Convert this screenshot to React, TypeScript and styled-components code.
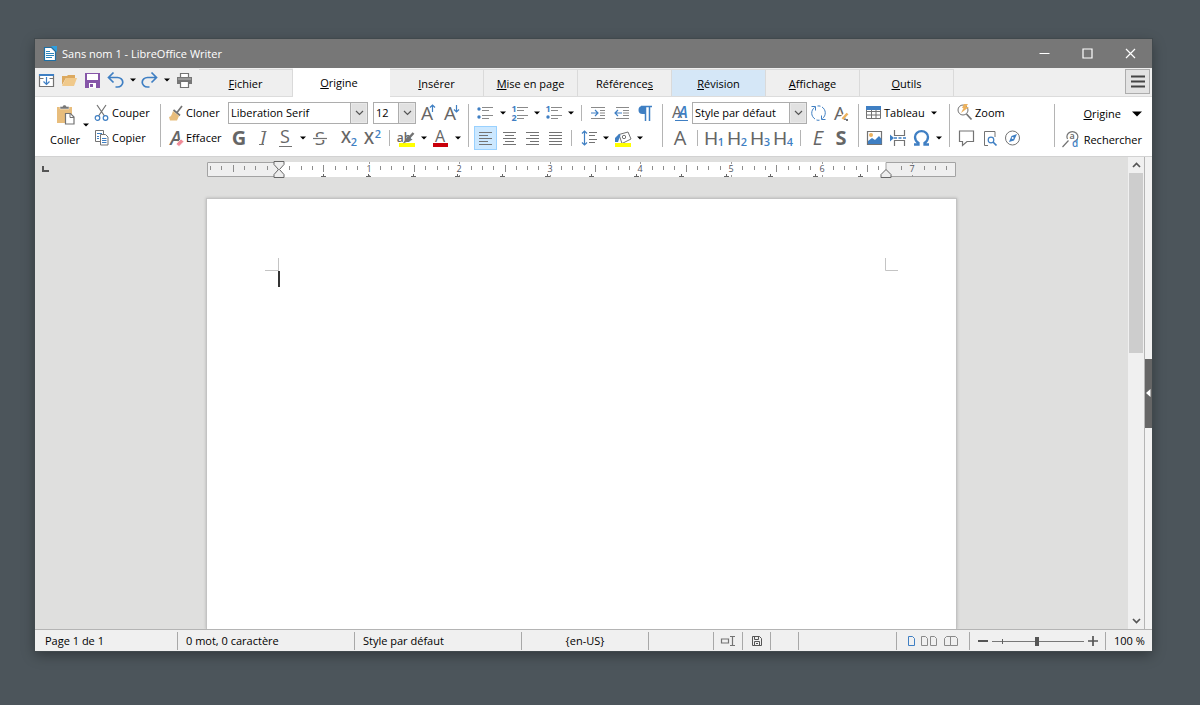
import React from "react";
import styled, { createGlobalStyle, css } from "styled-components";

const grey = "#737373";
const blue = "#3f7fc3";
const tan = "#e8bd7c";

const GlobalStyle = createGlobalStyle`
  * { box-sizing: border-box; }
  body {
    margin: 0;
    background: #4c555b;
    color: #000;
    font-family: "Open Sans", "Noto Sans", sans-serif;
    font-size: 11px;
    line-height: 16px;
  }
  button, select { font: inherit; color: inherit; }
  svg { display: block; flex: none; overflow: visible; }
`;

const Desktop = styled.div`
  display: flex;
  min-height: 100vh;
  padding: 39px 48px 54px 35px;
`;

const AppWindow = styled.main`
  display: flex;
  flex: 1;
  flex-direction: column;
  min-width: 0;
  background: #efefef;
  box-shadow: 0 0 0 1px #41494d, 0 4px 12px rgba(0, 0, 0, 0.35);
`;

/* Title bar */

const TitleBar = styled.header`
  display: flex;
  align-items: center;
  height: 29px;
  padding-left: 8px;
  background: #777;
  color: #fff;
`;

const Title = styled.h1`
  flex: 1;
  margin: 0 0 0 5px;
  font-size: 11px;
  font-weight: 400;
`;

const CaptionButton = styled.button`
  display: flex;
  align-items: center;
  justify-content: center;
  width: 43px;
  height: 29px;
  padding: 0;
  border: 0;
  background: none;
`;

/* Tab bar */

const TabBar = styled.nav`
  display: flex;
  height: 29px;
  background: #efefef;
  border-bottom: 1px solid #dcdcdc;
`;

const QuickAccess = styled.div`
  display: flex;
  width: 164px;
`;

const Tabs = styled.div`
  display: flex;
  flex: 1;
  align-items: flex-end;
`;

const Tab = styled.button<{ $active?: boolean; $tinted?: boolean }>`
  width: 94px;
  height: 27px;
  padding: 1px 0 0;
  border: 1px solid #dadada;
  border-width: 1px 1px 0 0;
  background: ${(p) => (p.$tinted ? "#d5e7f7" : "#efefef")};
  ${(p) =>
    p.$active &&
    css`
      width: 97px;
      height: 29px;
      margin-bottom: -1px;
      padding: 0 4px 0 0;
      border-color: #fff;
      background: #fff;
    `}
`;

const MenuButton = styled.button`
  display: flex;
  align-items: center;
  justify-content: center;
  width: 25px;
  height: 25px;
  margin: 1px 2px 0 0;
  padding: 0;
  border: 1px solid #adadad;
  background: #e3e3e3;
`;

/* Toolbar */

const Toolbar = styled.section`
  display: flex;
  height: 60px;
  padding: 4px 10px 0 12px;
  background: #fff;
  border-bottom: 1px solid #d2d2d2;
`;

const Group = styled.div<{ $end?: boolean }>`
  display: flex;
  flex-direction: column;
  gap: ${(p) => (p.$end ? 2 : 1)}px;
  padding-top: ${(p) => (p.$end ? 1 : 0)}px;
`;

const Row = styled.div<{ $end?: boolean }>`
  display: flex;
  align-items: center;
  justify-content: ${(p) => (p.$end ? "flex-end" : "flex-start")};
  height: 24px;
`;

const Tool = styled.button<{ $pressed?: boolean }>`
  display: flex;
  width: 23px;
  height: 24px;
  padding: 0;
  border: 0;
  background: none;
  ${(p) =>
    p.$pressed &&
    css`
      background: #cce8ff;
      box-shadow: inset 0 0 0 1px #99d1ff;
    `}
`;

const CaretButton = styled.button<{ $width?: number }>`
  display: flex;
  align-items: center;
  justify-content: center;
  width: ${(p) => p.$width ?? 11}px;
  height: 24px;
  padding: 0;
  border: 0;
  background: none;
`;

const LabelTool = styled.button<{ $width?: number }>`
  display: flex;
  align-items: center;
  width: ${(p) => (p.$width ? p.$width + "px" : "auto")};
  height: 24px;
  padding: 0;
  border: 0;
  background: none;
  white-space: nowrap;
`;

const PasteButton = styled.button`
  display: flex;
  flex-direction: column;
  align-items: center;
  gap: 6px;
  width: 36px;
  height: 48px;
  padding: 3px 0 0;
  border: 0;
  background: none;
`;

const PasteGroup = styled.div`
  display: flex;
  align-items: center;
  height: 48px;
  margin-right: 5px;
`;

const Divider = styled.div<{ $wide?: boolean; $push?: boolean }>`
  width: ${(p) => (p.$wide ? 13 : 11)}px;
  height: 43px;
  margin-top: 3px;
  margin-left: ${(p) => (p.$push ? "auto" : "0")};
  background: linear-gradient(#b4b4b4, #b4b4b4) center / 1px 100% no-repeat;
`;

const SmallDivider = styled.div`
  width: 11px;
  height: 16px;
  background: linear-gradient(#b4b4b4, #b4b4b4) center / 1px 100% no-repeat;
`;

const Spacer = styled.div`
  width: 7px;
`;

const ComboBox = styled.div<{ $width: number; $gap?: boolean }>`
  display: grid;
  grid-template-columns: 1fr 17px;
  width: ${(p) => p.$width}px;
  height: 22px;
  margin-right: ${(p) => (p.$gap ? 5 : 0)}px;
  border: 1px solid #adadad;
  background: #fff;
`;

const Select = styled.select`
  grid-column: 1 / 3;
  grid-row: 1;
  min-width: 0;
  padding: 0 0 0 2px;
  border: 0;
  outline: 0;
  background: none;
  appearance: none;
`;

const ComboArrow = styled.span`
  display: flex;
  grid-column: 2;
  grid-row: 1;
  align-items: center;
  justify-content: center;
  border-left: 1px solid #adadad;
  box-shadow: inset 0 0 0 1px #e9e9e9;
  background: #e1e1e1;
  pointer-events: none;
`;

const ContextMenu = styled(LabelTool)`
  gap: 11px;
`;

/* Document area */

const Workspace = styled.section`
  display: flex;
  flex: 1;
  min-height: 0;
`;

const Editor = styled.div`
  display: flex;
  flex: 1;
  flex-direction: column;
  min-width: 0;
  padding-top: 4px;
  background: #dfdfde;
`;

const RulerBar = styled.div`
  display: grid;
  grid-template-columns: 1fr 749px 1fr;
  height: 18px;
`;

const TabKind = styled.div`
  padding: 5px 0 0 7px;
`;

const Sheet = styled.article`
  display: flex;
  flex: 1;
  justify-content: space-between;
  align-self: center;
  align-items: flex-start;
  width: 751px;
  margin-top: 19px;
  padding: 59px 58px 0;
  background: #fff;
  border: 1px solid #c3c3c3;
  border-bottom: 0;
  box-shadow: 0 0 3px rgba(0, 0, 0, 0.2);
`;

const ScrollBar = styled.div`
  display: flex;
  flex-direction: column;
  width: 16px;
  padding: 0 1px;
  background: #f0f0f0;
`;

const ScrollButton = styled.button`
  display: flex;
  align-items: center;
  justify-content: center;
  height: 16px;
  padding: 0;
  border: 0;
  background: none;
`;

const ScrollTrack = styled.div`
  flex: 1;
`;

const ScrollThumb = styled.div`
  height: 41%;
  background: #cdcdcd;
`;

const SideDeck = styled.aside`
  display: flex;
  flex-direction: column;
  justify-content: center;
  width: 8px;
  border-left: 1px solid #b5b5b5;
  background: #f2f2f2;
`;

const DeckHandle = styled.button`
  display: flex;
  align-items: center;
  height: 69px;
  padding: 0;
  border: 0;
  background: #666;
`;

/* Status bar */

const StatusBar = styled.footer`
  display: flex;
  height: 22px;
  padding-top: 2px;
  border-top: 1px solid #b4b4b4;
  background: #f0f0f0;
`;

const StatusCell = styled.div<{ $width?: number; $center?: boolean; $first?: boolean }>`
  display: flex;
  flex: ${(p) => (p.$width ? "none" : "1")};
  align-items: center;
  justify-content: ${(p) => (p.$center ? "center" : "flex-start")};
  width: ${(p) => (p.$width ? p.$width + "px" : "auto")};
  height: 18px;
  padding-left: ${(p) => (p.$center ? 0 : p.$first ? 10 : 8)}px;
  border-left: ${(p) => (p.$first ? "0" : "1px solid #a8a8a8")};
  white-space: nowrap;
`;

const StatusTool = styled.button`
  display: flex;
  padding: 0;
  border: 0;
  background: none;
`;

const ZoomSlider = styled.input`
  width: 92px;
  height: 14px;
  margin: 0 4px;
  appearance: none;
  background:
    linear-gradient(#5f5f5f, #5f5f5f) 10px center / 1px 5px no-repeat,
    linear-gradient(#777, #777) center / 100% 1px no-repeat;
  &::-webkit-slider-thumb {
    appearance: none;
    width: 4px;
    height: 9px;
    background: #555;
  }
`;

/* Icons */

const Icon = ({ children, w = 23, h = 24 }: { children: React.ReactNode; w?: number; h?: number }) => (
  <svg width={w} height={h} viewBox={`0 0 ${w} ${h}`} fill="none" stroke={grey} strokeWidth="1.2" aria-hidden="true">
    {children}
  </svg>
);

type LetterProps = {
  children: string;
  x?: number;
  y?: number;
  size?: number;
  weight?: number;
  italic?: boolean;
  color?: string;
  family?: string;
};

const Letter = ({ children, x = 11, y = 19, size = 19, weight = 400, italic, color = "#666", family }: LetterProps) => (
  <text
    x={x}
    y={y}
    textAnchor="middle"
    fontSize={size}
    fontWeight={weight}
    fontStyle={italic ? "italic" : "normal"}
    fontFamily={family ?? "Open Sans, sans-serif"}
    fill={color}
    stroke="none"
  >
    {children}
  </text>
);

const Down = ({ size = 6 }: { size?: number }) => (
  <Icon w={size} h={size === 6 ? 4 : 6}>
    <path d={size === 6 ? "M0 0.5h6l-3 3z" : "M0 0.5h10l-5 5z"} fill="#000" stroke="none" />
  </Icon>
);

const Caret = ({ label, width }: { label: string; width?: number }) => (
  <CaretButton aria-label={label} $width={width}>
    <Down />
  </CaretButton>
);

const Combo = ({ label, value, width, gap }: { label: string; value: string; width: number; gap?: boolean }) => (
  <ComboBox $width={width} $gap={gap}>
    <Select aria-label={label} defaultValue={value}>
      <option>{value}</option>
    </Select>
    <ComboArrow>
      <Icon w={9} h={6}>
        <path d="M1 1l3.5 3.5L8 1" stroke="#555" />
      </Icon>
    </ComboArrow>
  </ComboBox>
);

const ListLines = ({ x = 10 }: { x?: number }) => (
  <path
    d={`M${x} 6.5h11M${x} 9.5h7M${x} 14.5h11M${x} 17.5h7`}
    stroke="#8a8a8a"
    strokeWidth="1"
  />
);

const Heading = ({ level }: { level: string }) => (
  <Tool aria-label={`Titre ${level}`}>
    <Icon>
      <Letter x={8} y={19} size={19} family="Liberation Sans, sans-serif">H</Letter>
      <Letter x={18} y={20} size={11} weight={600} color={blue}>{level}</Letter>
    </Icon>
  </Tool>
);

const alignPaths = [
  { label: "Aligner à gauche", d: "M5 6.5h13M5 9.5h9M5 12.5h13M5 15.5h9M5 18.5h13" },
  { label: "Centrer", d: "M6 6.5h13M8 9.5h9M6 12.5h13M8 15.5h9M6 18.5h13" },
  { label: "Aligner à droite", d: "M6 6.5h13M10 9.5h9M6 12.5h13M10 15.5h9M6 18.5h13" },
  { label: "Justifier", d: "M6 6.5h13M6 9.5h13M6 12.5h13M6 15.5h13M6 18.5h13" },
];

const rulerTicks = Array.from({ length: 66 }, (_, i) => i - 6);
const inch = 90.6;
const zero = 71.5;

const Ruler = () => (
  <svg width="749" height="18" viewBox="0 0 749 18" fill="none" role="img" aria-label="Règle">
    <rect x="0" y="1" width="749" height="15" fill="#fff" />
    <path d="M0.5 1.5H71V15.5H0.5zM679 1.5H748.5V15.5H679z" fill="#efefef" stroke="#a3a3a3" />
    {rulerTicks.map((n) => {
      const x = Math.floor(zero + (n * inch) / 8);
      if (n === 0 || n % 8 === 0 || Math.abs(x - 679) < 6 || x > 744) return null;
      const half = n % 4 === 0;
      return <path key={n} d={half ? `M${x + 0.5} 4v7` : `M${x + 0.5} 5v4`} stroke="#8d8d8d" />;
    })}
    {[1, 2, 3, 4, 5, 6, 7].map((n) => {
      const x = Math.floor(zero + n * inch);
      return (
        <React.Fragment key={n}>
          <path d={`M${x + 0.5} 1v2M${x + 0.5} 14v2`} stroke="#9a9a9a" />
          <text x={x} y="11" fontSize="9" textAnchor="middle" fill="#55565f" fontFamily="Open Sans, sans-serif">
            {n}
          </text>
        </React.Fragment>
      );
    })}
    {Array.from({ length: 13 }, (_, i) => Math.round(zero + (i + 1) * 44.7)).map((x) => (
      <path key={x} d={`M${x - 2} 15.5h5M${x + 0.5} 13v3`} stroke="#666" />
    ))}
    <path d="M67 0.5h10v3l-4.500 5 4.500 5v3h-10v-3l4.500-5-4.500-5z" fill="#eee" stroke="#666" />
    <path d="M674 16.500v-3l5-5 5 5v3z" fill="#eee" stroke="#666" />
  </svg>
);

const tabs = [
  { key: "F", before: "", after: "ichier" },
  { key: "O", before: "", after: "rigine", active: true },
  { key: "I", before: "", after: "nsérer" },
  { key: "M", before: "", after: "ise en page" },
  { key: "s", before: "Référence", after: "" },
  { key: "R", before: "", after: "évision", tinted: true },
  { key: "A", before: "", after: "ffichage" },
  { key: "O", before: "", after: "utils" },
];

export default function App() {
  return (
    <>
      <GlobalStyle />
      <Desktop>
        <AppWindow>
          <TitleBar>
            <Icon w={14} h={16}>
              <path d="M1.500 1.500h7l4 4v9h-11z" fill="#fff" stroke="#1d6fa5" />
              <path d="M8 0h6v6z" fill="#2e9fe0" stroke="none" />
              <path d="M3 5.500h4M3 7.500h8M3 9.500h8M3 11.500h6" stroke="#2a83ba" strokeWidth="1" />
            </Icon>
            <Title>Sans nom 1 - LibreOffice Writer</Title>
            <CaptionButton aria-label="Réduire">
              <Icon w={11} h={11}><path d="M0.500 5.500h10" stroke="#fff" strokeWidth="1" /></Icon>
            </CaptionButton>
            <CaptionButton aria-label="Agrandir">
              <Icon w={11} h={11}><path d="M1 1h9v9H1z" stroke="#fff" /></Icon>
            </CaptionButton>
            <CaptionButton aria-label="Fermer">
              <Icon w={11} h={11}><path d="M1 1l9 9M10 1l-9 9" stroke="#fff" /></Icon>
            </CaptionButton>
          </TitleBar>

          <TabBar>
            <QuickAccess>
              <Tool aria-label="Barre de menus">
                <Icon>
                  <path d="M4.500 6.500h14v12h-14z" fill="#fff" />
                  <path d="M4 7h15" stroke={blue} strokeWidth="2" />
                  <path d="M4.500 10.500h4M14.500 10.500h4" strokeWidth="1" />
                  <path d="M11.500 9v7M8.500 13.500l3 3 3-3" stroke={blue} />
                </Icon>
              </Tool>
              <Tool aria-label="Ouvrir">
                <Icon>
                  <path d="M4 17V8h5l1-1h7v3H8z" fill="#dca95f" stroke="none" />
                  <path d="M4 18l4-8h11l-3 8z" fill="#f0c98b" stroke="none" />
                </Icon>
              </Tool>
              <Tool aria-label="Enregistrer">
                <Icon>
                  <path d="M4 5h15v15H4z" fill="#8656a8" stroke="none" />
                  <path d="M6 6h11v6H6zM8 15h7v5H8z" fill="#fff" stroke="none" />
                  <path d="M9 16h3v3H9z" fill="#8656a8" stroke="none" />
                </Icon>
              </Tool>
              <Tool aria-label="Annuler">
                <Icon>
                  <path d="M9.500 4.500l-5 5 5 5M5 9.500h8.500a5 4.500 0 0 1 0 9.500h-2" stroke={blue} strokeWidth="1.700" />
                </Icon>
              </Tool>
              <Caret label="Historique d'annulation" />
              <Tool aria-label="Rétablir">
                <Icon>
                  <path d="M13.500 4.500l5 5-5 5M18 9.500H9.500a5 4.500 0 0 0 0 9.500h2" stroke={blue} strokeWidth="1.700" />
                </Icon>
              </Tool>
              <Caret label="Historique de rétablissement" />
              <Tool aria-label="Imprimer">
                <Icon>
                  <path d="M8.500 9V5.500h8V9" fill="#fff" />
                  <path d="M5 9h15v7H5z" fill="#777" stroke="none" />
                  <path d="M6 11h13" stroke="#bbb" strokeWidth="1" />
                  <path d="M8.500 13.500h8v6h-8z" fill="#fff" />
                </Icon>
              </Tool>
            </QuickAccess>
            <Tabs role="tablist">
              {tabs.map((t) => (
                <Tab key={t.key + t.after} role="tab" aria-selected={!!t.active} $active={t.active} $tinted={t.tinted}>
                  {t.before}
                  <u>{t.key}</u>
                  {t.after}
                </Tab>
              ))}
            </Tabs>
            <MenuButton aria-label="Menu">
              <Icon w={14} h={13}>
                <path d="M0 1.500h14M0 6.500h14M0 11.500h14" stroke="#444" strokeWidth="2" />
              </Icon>
            </MenuButton>
          </TabBar>

          <Toolbar aria-label="Origine">
            <PasteGroup>
              <PasteButton>
                <Icon w={20} h={22}>
                  <path d="M2 3h15v16H2z" fill={tan} stroke="none" />
                  <path d="M5 5V2.500h2.500l1-1.500h2l1 1.500H14V5z" fill="#777" stroke="#fff" strokeWidth="0.500" />
                  <path d="M10.500 9.500h5l3.500 3.500v7h-8.500z" fill="#fff" />
                  <path d="M15 9.500v4h4" strokeWidth="1" />
                </Icon>
                Coller
              </PasteButton>
              <Caret label="Collage spécial" width={6} />
            </PasteGroup>
            <Group>
              <LabelTool $width={60}>
                <Icon w={18}>
                  <path d="M3 4l7.500 11M12 4L4.500 15" />
                  <circle cx="3.500" cy="17" r="2.300" stroke={blue} />
                  <circle cx="11.500" cy="17" r="2.300" stroke={blue} />
                </Icon>
                Couper
              </LabelTool>
              <LabelTool $width={60}>
                <Icon w={18}>
                  <path d="M6 15.500H1.500v-11h8V8" strokeWidth="1" />
                  <path d="M6.500 8.500h5l2.500 2.500v8H6.500z" fill="#fff" strokeWidth="1" />
                  <path d="M3 7.500h5M3 10.500h2M3 12.500h2M8 12.500h4.500M8 14.500h4.500M8 16.500h4.500" stroke={blue} strokeWidth="1" />
                </Icon>
                Copier
              </LabelTool>
            </Group>
            <Divider $wide />
            <Group>
              <Row>
                <LabelTool $width={61}>
                  <Icon w={19}>
                    <path d="M15 5l-5 6.500M6.500 9l6.500 5.500" strokeWidth="1.700" />
                    <path d="M6 10l6 5-2 4.500H3l-1-3.500c2 0 3-3 4-6z" fill={tan} stroke="none" />
                  </Icon>
                  Cloner
                </LabelTool>
                <Combo label="Nom de police" value="Liberation Serif" width={140} gap />
                <Combo label="Taille de police" value="12" width={43} />
                <Tool aria-label="Augmenter la taille">
                  <Icon>
                    <Letter x={11} y={19} size={19}>A</Letter>
                    <path d="M16.500 11V4M14 6.500L16.500 4 19 6.500" stroke={blue} />
                  </Icon>
                </Tool>
                <Tool aria-label="Diminuer la taille">
                  <Icon>
                    <Letter x={11} y={19} size={19}>A</Letter>
                    <path d="M17.500 4v7M15 8.500l2.500 2.500L20 8.500" stroke={blue} />
                  </Icon>
                </Tool>
              </Row>
              <Row>
                <LabelTool $width={61}>
                  <Icon w={19}>
                    <Letter x={9} y={19} size={19} italic weight={600}>A</Letter>
                    <path d="M9 18l5-5 3 2.500-5 5z" fill="#f08c98" stroke="#fff" strokeWidth="0.700" />
                  </Icon>
                  Effacer
                </LabelTool>
                <Tool aria-label="Gras"><Icon><Letter weight={700} x={11} size={20}>G</Letter></Icon></Tool>
                <Tool aria-label="Italique">
                  <Icon>
                    <Letter italic x={12}>I</Letter>
                    <path d="M10.500 5.500h5M8 18.500h5" />
                  </Icon>
                </Tool>
                <Tool aria-label="Souligné">
                  <Icon>
                    <Letter size={18} y={17} x={11}>S</Letter>
                    <path d="M5 20.500h13" strokeWidth="1" />
                  </Icon>
                </Tool>
                <Caret label="Types de soulignement" />
                <Tool aria-label="Barré">
                  <Icon>
                    <Letter size={19} x={12}>S</Letter>
                    <path d="M5 12.500h14" stroke="#fff" strokeWidth="3" />
                    <path d="M5 12.500h14" />
                  </Icon>
                </Tool>
                <Spacer />
                <Tool aria-label="Indice">
                  <Icon>
                    <Letter size={16} x={8} y={17} weight={600}>X</Letter>
                    <Letter size={11} x={16} y={20} weight={600} color={blue}>2</Letter>
                  </Icon>
                </Tool>
                <Tool aria-label="Exposant">
                  <Icon>
                    <Letter size={16} x={8} y={18} weight={600}>X</Letter>
                    <Letter size={11} x={17} y={12} weight={600} color={blue}>2</Letter>
                  </Icon>
                </Tool>
                <SmallDivider />
                <Tool aria-label="Surlignage">
                  <Icon>
                    <path d="M4 17h16v4H4z" fill="#ff0" stroke="none" />
                    <Letter size={12} x={9} y={16} weight={600}>ab</Letter>
                    <path d="M18.500 7l-5.500 6M11 15l2-3 2 1.500z" strokeWidth="2.500" />
                  </Icon>
                </Tool>
                <Caret label="Couleur de surlignage" />
                <Tool aria-label="Couleur de police">
                  <Icon>
                    <Letter size={16} x={11} y={16}>A</Letter>
                    <path d="M4 17h15v4H4z" fill="#c9000b" stroke="none" />
                  </Icon>
                </Tool>
                <Caret label="Choisir la couleur" />
              </Row>
            </Group>
            <Divider />
            <Group>
              <Row>
                <Tool aria-label="Puces">
                  <Icon>
                    <ListLines x={8} />
                    <circle cx="5" cy="8" r="1.700" fill={blue} stroke="none" />
                    <circle cx="5" cy="16" r="1.700" fill={blue} stroke="none" />
                  </Icon>
                </Tool>
                <Caret label="Choix de puces" />
                <Tool aria-label="Numérotation">
                  <Icon>
                    <ListLines x={9} />
                    <Letter size={9} x={6} y={11} weight={700} color={blue}>1</Letter>
                    <Letter size={9} x={6} y={20} weight={700} color={blue}>2</Letter>
                  </Icon>
                </Tool>
                <Caret label="Choix de numérotation" />
                <Tool aria-label="Plan">
                  <Icon>
                    <ListLines x={9} />
                    <Letter size={9} x={6} y={11} weight={700} color={blue}>1</Letter>
                    <circle cx="6" cy="16" r="1.700" fill={blue} stroke="none" />
                  </Icon>
                </Tool>
                <Caret label="Choix de plan" />
                <SmallDivider />
                <Tool aria-label="Augmenter le retrait">
                  <Icon>
                    <path d="M4 6.500h14M13 9.500h5M13 14.500h5M4 17.500h14" stroke="#8a8a8a" strokeWidth="1" />
                    <path d="M4 12h7M8 9l3 3-3 3" stroke={blue} />
                    <path d="M13 12h5" stroke="#8a8a8a" strokeWidth="1" />
                  </Icon>
                </Tool>
                <Tool aria-label="Diminuer le retrait">
                  <Icon>
                    <path d="M6 6.500h13M13 9.500h6M13 14.500h6M6 17.500h13" stroke="#8a8a8a" strokeWidth="1" />
                    <path d="M5 12h7M8 9l-3 3 3 3" stroke={blue} />
                    <path d="M13 12h6" stroke="#8a8a8a" strokeWidth="1" />
                  </Icon>
                </Tool>
                <Tool aria-label="Marques de formatage">
                  <Icon>
                    <path d="M12 5H9.500a4 4 0 0 0 0 8H12z" fill={blue} stroke="none" />
                    <path d="M8 5.500h11M12.500 5v15M16.500 5v15" stroke={blue} strokeWidth="1.500" />
                  </Icon>
                </Tool>
              </Row>
              <Row>
                {alignPaths.map((a, i) => (
                  <Tool key={a.label} aria-label={a.label} $pressed={i === 0}>
                    <Icon><path d={a.d} strokeWidth="1" /></Icon>
                  </Tool>
                ))}
                <SmallDivider />
                <Tool aria-label="Interligne">
                  <Icon>
                    <path d="M7.500 5v14M5 7.500L7.500 5 10 7.500M5 16.500L7.500 19l2.500-2.500" stroke={blue} />
                    <path d="M12 6.500h8M12 9.500h6M12 13.500h8M12 16.500h6" strokeWidth="1" />
                  </Icon>
                </Tool>
                <Caret label="Choisir l'interligne" />
                <Tool aria-label="Couleur d'arrière-plan">
                  <Icon>
                    <path d="M8 8.500l9-2.500 3 7-9 4.500z" fill="#fff" strokeWidth="1" />
                    <circle cx="13" cy="11" r="1.700" strokeWidth="1" />
                    <path d="M4 16v-4l4-4 1.500 1-2.500 7z" fill={blue} stroke="none" />
                    <path d="M4 17h16v4H4z" fill="#ff0" stroke="none" />
                  </Icon>
                </Tool>
                <Caret label="Choisir l'arrière-plan" />
              </Row>
            </Group>
            <Divider $wide />
            <Group>
              <Row>
                <Tool aria-label="Styles">
                  <Icon>
                    <Letter size={16} x={8} y={17}>A</Letter>
                    <Letter size={16} x={14} y={17} italic weight={600} color={blue}>A</Letter>
                    <path d="M6 19.500h13" stroke={blue} strokeWidth="1" />
                  </Icon>
                </Tool>
                <Combo label="Style de paragraphe" value="Style par défaut" width={115} />
                <Tool aria-label="Actualiser le style">
                  <Icon>
                    <path d="M8 18A7 7 0 0 1 7.500 6.500M4.500 5.500h4v4M15 6a7 7 0 0 1 .5 11.500M18.500 18.500h-4v-4M10.500 5a7 7 0 0 1 3 .200M9.500 19a7 7 0 0 0 3 .200" stroke={blue} strokeWidth="1" />
                  </Icon>
                </Tool>
                <Tool aria-label="Nouveau style">
                  <Icon>
                    <Letter size={19} x={10} y={19}>A</Letter>
                    <path d="M18 11l-6.500 6.500" stroke="#fff" strokeWidth="4" />
                    <path d="M17.500 12.500L12.500 18" stroke="#edb25d" strokeWidth="2.500" />
                    <path d="M16 18h2v2h-2z" fill={grey} stroke="none" />
                  </Icon>
                </Tool>
              </Row>
              <Row>
                <Tool aria-label="Style par défaut"><Icon><Letter size={20}>A</Letter></Icon></Tool>
                <SmallDivider />
                {["1", "2", "3", "4"].map((n) => <Heading key={n} level={n} />)}
                <SmallDivider />
                <Tool aria-label="Accentuation"><Icon><Letter italic x={12} size={20}>E</Letter></Icon></Tool>
                <Tool aria-label="Accentuation forte"><Icon><Letter weight={700} x={12} size={20}>S</Letter></Icon></Tool>
              </Row>
            </Group>
            <Divider />
            <Group>
              <Row>
                <LabelTool $width={64}>
                  <Icon w={20}>
                    <path d="M2.500 6.500h14v11h-14zM7.500 8v9.500M12 8v9.500M2.500 10.500h14M2.500 14h14" strokeWidth="1" />
                    <path d="M2 5h15v4H2z" fill={blue} stroke="none" />
                  </Icon>
                  Tableau
                </LabelTool>
                <Caret label="Insérer un tableau" />
              </Row>
              <Row>
                <Tool aria-label="Image">
                  <Icon>
                    <path d="M3.500 5.500h14v13h-14z" fill="#fff" />
                    <path d="M4 18v-3l4-3 3 2 4-4 2.500 3v5z" fill={blue} stroke="none" />
                    <circle cx="7" cy="9" r="2" fill="#edb25d" stroke="none" />
                  </Icon>
                </Tool>
                <Tool aria-label="Saut de page">
                  <Icon>
                    <path d="M7.500 4v5.500h10V4M7.500 20v-5.500h10V20" />
                    <path d="M7 12h13" stroke={blue} strokeDasharray="3 1.500" strokeWidth="1.500" />
                    <path d="M3 8.500v7l4-3.500z" fill={blue} stroke="none" />
                  </Icon>
                </Tool>
                <Tool aria-label="Caractères spéciaux">
                  <Icon>
                    <path
                      d="M4 18.500h4.500V17C6 15.500 5 13 5 11a6.500 5.800 0 0 1 13 0c0 2-1 4.500-3.500 6v1.500H19"
                      stroke={blue}
                      strokeWidth="2.300"
                    />
                  </Icon>
                </Tool>
                <Caret label="Choisir un caractère" />
              </Row>
            </Group>
            <Divider />
            <Group>
              <Row>
                <LabelTool>
                  <Icon w={20}>
                    <circle cx="8" cy="9" r="5" strokeWidth="1" />
                    <path d="M11.500 13l5 5.500" strokeWidth="1.700" />
                    <path d="M9 3h4l-2 3h3l-8 6 2.500-5H7z" fill="#edb25d" stroke="none" />
                  </Icon>
                  Zoom
                </LabelTool>
              </Row>
              <Row>
                <Tool aria-label="Commentaire">
                  <Icon><path d="M4.500 5h14v10.500H12l-4.500 4v-4h-3z" /></Icon>
                </Tool>
                <Tool aria-label="Aperçu">
                  <Icon>
                    <path d="M10 19.500H6.500v-14H17V11" strokeWidth="1" />
                    <circle cx="13" cy="14" r="2.800" stroke={blue} />
                    <path d="M15 16l3.500 3.500" stroke={blue} strokeWidth="1.700" />
                  </Icon>
                </Tool>
                <Tool aria-label="Navigateur">
                  <Icon>
                    <circle cx="11.500" cy="12" r="7" strokeWidth="1" />
                    <path d="M16 8l-3 6.500-5 1.500 2.500-6z" fill={blue} stroke="none" />
                    <circle cx="11.700" cy="12" r="1" fill="#fff" stroke="none" />
                  </Icon>
                </Tool>
              </Row>
            </Group>
            <Divider $push />
            <Group $end>
              <Row $end>
                <ContextMenu>
                  <span><u>O</u>rigine</span>
                  <Down size={10} />
                </ContextMenu>
              </Row>
              <LabelTool>
                <Icon w={24}>
                  <path d="M7.500 11a5.500 5 0 1 1 6.500 2.500M8.500 12.500L2.500 19" />
                  <Letter size={9} x={12} y={11} weight={600}>a</Letter>
                  <Letter size={10} x={15} y={19} weight={600} color={blue}>d</Letter>
                </Icon>
                Rechercher
              </LabelTool>
            </Group>
          </Toolbar>

          <Workspace>
            <Editor>
              <RulerBar>
                <TabKind>
                  <Icon w={8} h={7}><path d="M1 0v5h6" stroke="#555" strokeWidth="2" /></Icon>
                </TabKind>
                <Ruler />
              </RulerBar>
              <Sheet>
                <Icon w={15} h={30}>
                  <path d="M13.500 0v13M0 12.500h13" stroke="#c4c4c4" strokeWidth="1" />
                  <path d="M14 13v16" stroke="#333" strokeWidth="2" />
                </Icon>
                <Icon w={13} h={14}>
                  <path d="M0.500 0v12.500H13" stroke="#c4c4c4" strokeWidth="1" />
                </Icon>
              </Sheet>
            </Editor>
            <ScrollBar>
              <ScrollButton aria-label="Défiler vers le haut">
                <Icon w={9} h={6}><path d="M1 5l3.500-3.500L8 5" stroke="#555" strokeWidth="1.700" /></Icon>
              </ScrollButton>
              <ScrollTrack><ScrollThumb /></ScrollTrack>
              <ScrollButton aria-label="Défiler vers le bas">
                <Icon w={9} h={6}><path d="M1 1l3.500 3.500L8 1" stroke="#555" strokeWidth="1.700" /></Icon>
              </ScrollButton>
            </ScrollBar>
            <SideDeck>
              <DeckHandle aria-label="Afficher le volet latéral">
                <Icon w={6} h={8}><path d="M5.500 0v8L1 4z" fill="#fff" stroke="none" /></Icon>
              </DeckHandle>
            </SideDeck>
          </Workspace>

          <StatusBar>
            <StatusCell $width={142} $first>Page 1 de 1</StatusCell>
            <StatusCell $width={177}>0 mot, 0 caractère</StatusCell>
            <StatusCell $width={167}>Style par défaut</StatusCell>
            <StatusCell $width={127} $center>{"{en-US}"}</StatusCell>
            <StatusCell $width={65} />
            <StatusCell $width={29} $center>
              <StatusTool aria-label="Mode d'insertion">
                <Icon w={16} h={12}>
                  <path d="M1.500 4h7v4h-7zM10 1.500h5M10 10.500h5M12.500 1.500v9" />
                </Icon>
              </StatusTool>
            </StatusCell>
            <StatusCell $width={28} $center>
              <StatusTool aria-label="État du document">
                <Icon w={10} h={10}>
                  <path d="M0.500 0.500h7l2 2v7h-9zM2.500 0.500v3h4v-3M2.500 9.500v-4h5v4M4 7.500h2" strokeWidth="1" stroke="#555" />
                </Icon>
              </StatusTool>
            </StatusCell>
            <StatusCell $width={28} />
            <StatusCell />
            <StatusCell $width={73} $center>
              <StatusTool aria-label="Une seule page">
                <Icon w={13} h={10}><path d="M1.500 0.500h4l2 2v7h-6z" stroke={blue} strokeWidth="1" /></Icon>
              </StatusTool>
              <StatusTool aria-label="Plusieurs pages">
                <Icon w={21} h={10}>
                  <path d="M1.500 0.500h4l2 2v7h-6zM10.500 0.500h4l2 2v7h-6z" strokeWidth="1" stroke="#8a8a8a" />
                </Icon>
              </StatusTool>
              <StatusTool aria-label="Vue livre">
                <Icon w={18} h={10}>
                  <path d="M9.500 9.500h-6v-7l2-2h4zM9.500 0.500h5l2 2v7h-7z" strokeWidth="1" stroke="#8a8a8a" />
                </Icon>
              </StatusTool>
            </StatusCell>
            <StatusCell $width={136}>
              <StatusTool aria-label="Zoom arrière">
                <Icon w={10} h={10}><path d="M0 5h10" stroke="#555" strokeWidth="2" /></Icon>
              </StatusTool>
              <ZoomSlider type="range" aria-label="Facteur de zoom" min={0} max={100} defaultValue={49} />
              <StatusTool aria-label="Zoom avant">
                <Icon w={10} h={10}><path d="M0 5h10M5 0v10" stroke="#555" strokeWidth="1.700" /></Icon>
              </StatusTool>
            </StatusCell>
            <StatusCell $width={47}>100 %</StatusCell>
          </StatusBar>
        </AppWindow>
      </Desktop>
    </>
  );
}
